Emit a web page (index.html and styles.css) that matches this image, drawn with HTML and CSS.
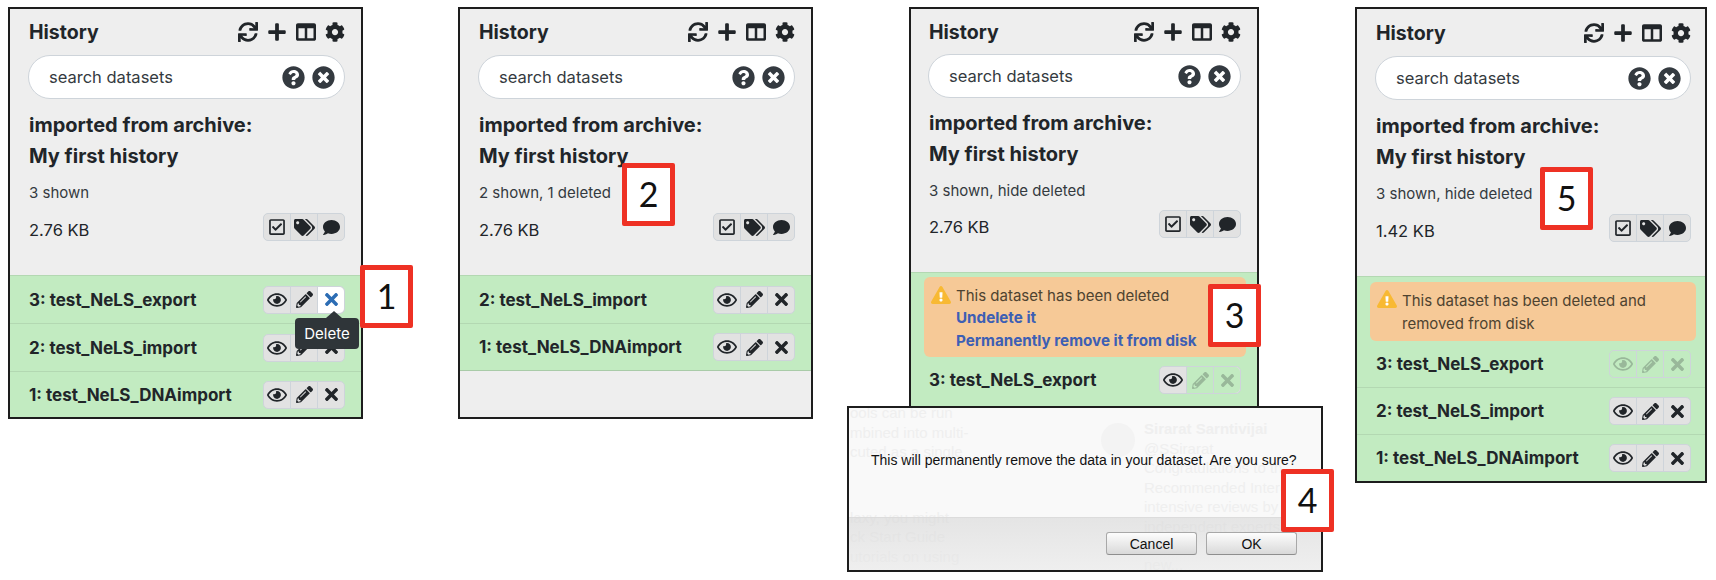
FILE: index.html
```html
<!DOCTYPE html>
<html lang="en">
<head>
    <meta charset="UTF-8">
    <title>History panel steps</title>
    <link rel="stylesheet" href="styles.css">
</head>
<body>
    <svg class="defs" width="0" height="0">
        <symbol id="i-sync" viewBox="0 0 512 512"><path d="M440.65 12.57l4 82.77A247.16 247.16 0 0 0 255.83 8C134.73 8 33.91 94.92 12.29 209.82A12 12 0 0 0 24.09 224h49.05a12 12 0 0 0 11.67-9.26 175.91 175.91 0 0 1 317-56.94l-101.46-4.86a12 12 0 0 0-12.57 12v47.41a12 12 0 0 0 12 12H500a12 12 0 0 0 12-12V12a12 12 0 0 0-12-12h-47.37a12 12 0 0 0-11.98 12.57zM255.83 432a175.61 175.61 0 0 1-146-77.8l101.8 4.87a12 12 0 0 0 12.57-12v-47.4a12 12 0 0 0-12-12H12a12 12 0 0 0-12 12V500a12 12 0 0 0 12 12h47.35a12 12 0 0 0 12-12.6l-4.15-82.57A247.17 247.17 0 0 0 255.83 504c121.11 0 221.93-86.92 243.55-201.82a12 12 0 0 0-11.8-14.18h-49.05a12 12 0 0 0-11.67 9.26A175.86 175.86 0 0 1 255.83 432z"/></symbol>
        <symbol id="i-plus" viewBox="0 0 448 512"><path d="M416 208H272V64c0-17.67-14.33-32-32-32h-32c-17.67 0-32 14.33-32 32v144H32c-17.67 0-32 14.33-32 32v32c0 17.67 14.33 32 32 32h144v144c0 17.67 14.33 32 32 32h32c17.67 0 32-14.33 32-32V304h144c17.67 0 32-14.33 32-32v-32c0-17.67-14.33-32-32-32z"/></symbol>
        <symbol id="i-columns" viewBox="0 0 512 512"><path d="M464 32H48C21.49 32 0 53.49 0 80v352c0 26.51 21.49 48 48 48h416c26.51 0 48-21.49 48-48V80c0-26.51-21.49-48-48-48zM224 416H64V160h160v256zm224 0H288V160h160v256z"/></symbol>
        <symbol id="i-cog" viewBox="0 0 512 512"><path d="M487.4 315.7l-42.6-24.6c4.3-23.2 4.3-47 0-70.2l42.6-24.6c4.9-2.8 7.1-8.6 5.5-14-11.1-35.6-30-67.8-54.7-94.6-3.8-4.1-10-5.1-14.8-2.3L380.8 110c-17.9-15.4-38.5-27.3-60.8-35.1V25.8c0-5.6-3.9-10.5-9.4-11.7-36.7-8.2-74.3-7.8-109.2 0-5.5 1.2-9.4 6.1-9.4 11.7V75c-22.2 7.9-42.8 19.8-60.8 35.1L88.7 85.5c-4.9-2.8-11-1.9-14.8 2.3-24.7 26.7-43.6 58.9-54.7 94.6-1.7 5.4.6 11.2 5.5 14L67.3 221c-4.3 23.2-4.3 47 0 70.2l-42.6 24.6c-4.9 2.8-7.1 8.6-5.5 14 11.1 35.6 30 67.8 54.7 94.6 3.8 4.1 10 5.1 14.8 2.3l42.6-24.6c17.9 15.4 38.5 27.3 60.8 35.1v49.2c0 5.6 3.9 10.5 9.4 11.7 36.7 8.2 74.3 7.8 109.2 0 5.5-1.2 9.4-6.1 9.4-11.7v-49.2c22.2-7.9 42.8-19.8 60.8-35.1l42.6 24.6c4.9 2.8 11 1.9 14.8-2.3 24.7-26.7 43.6-58.9 54.7-94.6 1.5-5.5-.7-11.3-5.6-14.1zM256 336c-44.1 0-80-35.9-80-80s35.9-80 80-80 80 35.9 80 80-35.9 80-80 80z"/></symbol>
        <symbol id="i-question" viewBox="0 0 512 512"><path d="M504 256c0 136.997-111.043 248-248 248S8 392.997 8 256C8 119.083 119.043 8 256 8s248 111.083 248 248zM262.655 90c-54.497 0-89.255 22.957-116.549 63.758-3.536 5.286-2.353 12.415 2.715 16.258l34.699 26.31c5.205 3.947 12.621 3.008 16.665-2.122 17.864-22.658 30.113-35.797 57.303-35.797 20.429 0 45.698 13.148 45.698 32.958 0 14.976-12.363 22.667-32.534 33.976C247.128 238.528 216 254.941 216 296v4c0 6.627 5.373 12 12 12h56c6.627 0 12-5.373 12-12v-1.333c0-28.462 83.186-29.647 83.186-106.667 0-58.002-60.165-102-116.531-102zM256 338c-25.365 0-46 20.635-46 46 0 25.364 20.635 46 46 46s46-20.636 46-46c0-25.365-20.635-46-46-46z"/></symbol>
        <symbol id="i-clear" viewBox="0 0 512 512"><path d="M256 8C119 8 8 119 8 256s111 248 248 248 248-111 248-248S393 8 256 8zm121.6 313.1c4.7 4.7 4.7 12.3 0 17L338 377.6c-4.7 4.7-12.3 4.7-17 0L256 312l-65.1 65.6c-4.7 4.7-12.3 4.7-17 0L134.4 338c-4.7-4.7-4.7-12.3 0-17l65.6-65-65.6-65.1c-4.7-4.7-4.7-12.3 0-17l39.6-39.6c4.7-4.7 12.3-4.7 17 0l65 65.7 65.1-65.6c4.7-4.7 12.3-4.7 17 0l39.6 39.6c4.7 4.7 4.7 12.3 0 17L312 256l65.6 65.1z"/></symbol>
        <symbol id="i-check" viewBox="0 0 448 512"><path d="M400 32H48C21.49 32 0 53.49 0 80v352c0 26.51 21.49 48 48 48h352c26.51 0 48-21.49 48-48V80c0-26.51-21.49-48-48-48zm0 400H48V80h352v352zm-35.864-241.724L191.547 361.48c-4.705 4.667-12.303 4.637-16.97-.068l-90.781-91.516c-4.667-4.705-4.637-12.303.069-16.971l22.719-22.536c4.705-4.667 12.303-4.637 16.97.069l59.792 60.277 141.352-140.216c4.705-4.667 12.303-4.637 16.97.068l22.536 22.718c4.667 4.706 4.637 12.304-.068 16.971z"/></symbol>
        <symbol id="i-tags" viewBox="0 0 640 512"><path d="M497.941 225.941L286.059 14.059A48 48 0 0 0 252.118 0H48C21.49 0 0 21.49 0 48v204.118a48 48 0 0 0 14.059 33.941l211.882 211.882c18.744 18.745 49.136 18.746 67.882 0l204.118-204.118c18.745-18.745 18.745-49.137 0-67.882zM112 160c-26.51 0-48-21.49-48-48s21.49-48 48-48 48 21.49 48 48-21.49 48-48 48zm513.941 133.823L421.823 497.941c-18.745 18.745-49.137 18.745-67.882 0l-.36-.36L527.64 323.522c16.999-16.999 26.36-39.6 26.36-63.64s-9.362-46.641-26.36-63.64L331.397 0h48.721a48 48 0 0 1 33.941 14.059l211.882 211.882c18.745 18.745 18.745 49.137 0 67.882z"/></symbol>
        <symbol id="i-comment" viewBox="0 0 512 512"><path d="M256 32C114.6 32 0 125.1 0 240c0 49.6 21.4 95 57 130.7C44.5 421.1 2.7 466 2.2 466.5c-2.2 2.3-2.8 5.7-1.5 8.7S4.8 480 8 480c66.3 0 116-31.8 140.6-51.4 32.7 12.3 69 19.4 107.4 19.4 141.4 0 256-93.1 256-208S397.4 32 256 32z"/></symbol>
        <symbol id="i-eye" viewBox="0 0 576 512"><path d="M288 144a110.94 110.94 0 0 0-31.24 5 55.4 55.4 0 0 1 7.24 27 56 56 0 0 1-56 56 55.4 55.4 0 0 1-27-7.24A111.71 111.71 0 1 0 288 144zm284.52 97.4C518.29 135.59 410.93 64 288 64S57.68 135.64 3.48 241.41a32.35 32.35 0 0 0 0 29.19C57.71 376.41 165.07 448 288 448s230.32-71.64 284.52-177.41a32.35 32.35 0 0 0 0-29.19zM288 400c-98.65 0-189.09-55-237.93-144C98.91 167 189.34 112 288 112s189.09 55 237.93 144C477.1 345 386.66 400 288 400z"/></symbol>
        <symbol id="i-pencil" viewBox="0 0 512 512"><path d="M497.9 142.1l-46.1 46.1c-4.7 4.7-12.3 4.7-17 0l-111-111c-4.7-4.7-4.7-12.3 0-17l46.1-46.1c18.7-18.7 49.1-18.7 67.9 0l60.1 60.1c18.8 18.7 18.8 49.1 0 67.9zM284.2 99.8L21.6 362.4.4 483.9c-2.9 16.4 11.4 30.6 27.8 27.8l121.5-21.3 262.6-262.6c4.7-4.7 4.7-12.3 0-17l-111-111c-4.8-4.7-12.4-4.7-17.1 0zM124.1 339.9c-5.5-5.5-5.5-14.3 0-19.8l154-154c5.5-5.5 14.3-5.5 19.8 0s5.5 14.3 0 19.8l-154 154c-5.5 5.5-14.3 5.5-19.8 0zM88 424h48v36.3l-64.5 11.3-31.1-31.1L51.7 376H88v48z"/></symbol>
        <symbol id="i-times" viewBox="0 0 352 512"><path d="M242.72 256l100.07-100.07c12.28-12.28 12.28-32.19 0-44.48l-22.24-22.24c-12.28-12.28-32.19-12.28-44.48 0L176 189.28 75.93 89.21c-12.28-12.28-32.19-12.28-44.48 0L9.21 111.45c-12.28 12.28-12.28 32.19 0 44.48L109.28 256 9.21 356.07c-12.28 12.28-12.28 32.19 0 44.48l22.24 22.24c12.28 12.28 32.2 12.28 44.48 0L176 322.72l100.07 100.07c12.28 12.28 32.2 12.28 44.48 0l22.24-22.24c12.28-12.28 12.28-32.19 0-44.48L242.72 256z"/></symbol>
        <symbol id="i-warn" viewBox="0 0 576 512"><path d="M569.517 440.013C587.975 472.007 564.806 512 527.94 512H48.054c-36.937 0-59.999-40.055-41.577-71.987L246.423 23.985c18.467-32.009 64.72-31.951 83.154 0l239.94 416.028zM288 354c-25.405 0-46 20.595-46 46s20.595 46 46 46 46-20.595 46-46-20.595-46-46-46zm-43.673-165.346l7.418 136c.347 6.364 5.609 11.346 11.982 11.346h48.546c6.373 0 11.635-4.982 11.982-11.346l7.418-136c.375-6.874-5.098-12.654-11.982-12.654h-63.383c-6.884 0-12.356 5.78-11.981 12.654z"/></symbol>
    </svg>

    <div class="page">

        <!-- step 1 -->
        <div class="panel panel-one">
            <div class="top">
                <div class="head">
                    <span class="head-title">History</span>
                    <div class="tools">
                        <svg class="tool"><use href="#i-sync"/></svg>
                        <svg class="tool"><use href="#i-plus"/></svg>
                        <svg class="tool"><use href="#i-columns"/></svg>
                        <svg class="tool"><use href="#i-cog"/></svg>
                    </div>
                </div>
                <div class="search">
                    <span class="search-text">search datasets</span>
                    <svg class="search-icon"><use href="#i-question"/></svg>
                    <svg class="search-icon"><use href="#i-clear"/></svg>
                </div>
                <div class="name">imported from archive:<br>My first history</div>
                <div class="shown">3 shown</div>
                <div class="size-row">
                    <span class="size">2.76 KB</span>
                    <div class="btns">
                        <span class="btn"><svg class="ic-check"><use href="#i-check"/></svg></span>
                        <span class="btn"><svg class="ic-tags"><use href="#i-tags"/></svg></span>
                        <span class="btn"><svg class="ic-comment"><use href="#i-comment"/></svg></span>
                    </div>
                </div>
            </div>
            <div class="row">
                <span class="row-name">3: test_NeLS_export</span>
                <div class="btns">
                    <span class="btn"><svg class="ic-eye"><use href="#i-eye"/></svg></span>
                    <span class="btn"><svg class="ic-pencil"><use href="#i-pencil"/></svg></span>
                    <span class="btn btn-hover">
                        <svg class="ic-times"><use href="#i-times"/></svg>
                        <span class="tooltip">Delete</span>
                    </span>
                </div>
            </div>
            <div class="row">
                <span class="row-name">2: test_NeLS_import</span>
                <div class="btns">
                    <span class="btn"><svg class="ic-eye"><use href="#i-eye"/></svg></span>
                    <span class="btn"><svg class="ic-pencil"><use href="#i-pencil"/></svg></span>
                    <span class="btn"><svg class="ic-times"><use href="#i-times"/></svg></span>
                </div>
            </div>
            <div class="row">
                <span class="row-name">1: test_NeLS_DNAimport</span>
                <div class="btns">
                    <span class="btn"><svg class="ic-eye"><use href="#i-eye"/></svg></span>
                    <span class="btn"><svg class="ic-pencil"><use href="#i-pencil"/></svg></span>
                    <span class="btn"><svg class="ic-times"><use href="#i-times"/></svg></span>
                </div>
            </div>
        </div>

        <!-- step 2 -->
        <div class="panel panel-two">
            <div class="top">
                <div class="head">
                    <span class="head-title">History</span>
                    <div class="tools">
                        <svg class="tool"><use href="#i-sync"/></svg>
                        <svg class="tool"><use href="#i-plus"/></svg>
                        <svg class="tool"><use href="#i-columns"/></svg>
                        <svg class="tool"><use href="#i-cog"/></svg>
                    </div>
                </div>
                <div class="search">
                    <span class="search-text">search datasets</span>
                    <svg class="search-icon"><use href="#i-question"/></svg>
                    <svg class="search-icon"><use href="#i-clear"/></svg>
                </div>
                <div class="name">imported from archive:<br>My first history</div>
                <div class="shown">2 shown, 1 deleted</div>
                <div class="size-row">
                    <span class="size">2.76 KB</span>
                    <div class="btns">
                        <span class="btn"><svg class="ic-check"><use href="#i-check"/></svg></span>
                        <span class="btn"><svg class="ic-tags"><use href="#i-tags"/></svg></span>
                        <span class="btn"><svg class="ic-comment"><use href="#i-comment"/></svg></span>
                    </div>
                </div>
            </div>
            <div class="row">
                <span class="row-name">2: test_NeLS_import</span>
                <div class="btns">
                    <span class="btn"><svg class="ic-eye"><use href="#i-eye"/></svg></span>
                    <span class="btn"><svg class="ic-pencil"><use href="#i-pencil"/></svg></span>
                    <span class="btn"><svg class="ic-times"><use href="#i-times"/></svg></span>
                </div>
            </div>
            <div class="row row-last">
                <span class="row-name">1: test_NeLS_DNAimport</span>
                <div class="btns">
                    <span class="btn"><svg class="ic-eye"><use href="#i-eye"/></svg></span>
                    <span class="btn"><svg class="ic-pencil"><use href="#i-pencil"/></svg></span>
                    <span class="btn"><svg class="ic-times"><use href="#i-times"/></svg></span>
                </div>
            </div>
        </div>

        <!-- step 3, the dialog of step 4 lies over its lower end -->
        <div class="panel panel-three">
            <div class="top">
                <div class="head">
                    <span class="head-title">History</span>
                    <div class="tools">
                        <svg class="tool"><use href="#i-sync"/></svg>
                        <svg class="tool"><use href="#i-plus"/></svg>
                        <svg class="tool"><use href="#i-columns"/></svg>
                        <svg class="tool"><use href="#i-cog"/></svg>
                    </div>
                </div>
                <div class="search">
                    <span class="search-text">search datasets</span>
                    <svg class="search-icon"><use href="#i-question"/></svg>
                    <svg class="search-icon"><use href="#i-clear"/></svg>
                </div>
                <div class="name">imported from archive:<br>My first history</div>
                <div class="shown">3 shown, hide deleted</div>
                <div class="size-row">
                    <span class="size">2.76 KB</span>
                    <div class="btns">
                        <span class="btn"><svg class="ic-check"><use href="#i-check"/></svg></span>
                        <span class="btn"><svg class="ic-tags"><use href="#i-tags"/></svg></span>
                        <span class="btn"><svg class="ic-comment"><use href="#i-comment"/></svg></span>
                    </div>
                </div>
            </div>
            <div class="green">
                <div class="alert">
                    <svg class="warn" viewBox="0 0 576 512"><rect x="225" y="160" width="126" height="300" fill="#fff"/><use href="#i-warn" width="576" height="512"/></svg>
                    <div class="alert-text">
                        This dataset has been deleted<br>
                        <a class="alert-link">Undelete it</a><br>
                        <a class="alert-link">Permanently remove it from disk</a>
                    </div>
                </div>
                <div class="row">
                    <span class="row-name">3: test_NeLS_export</span>
                    <div class="btns">
                        <span class="btn"><svg class="ic-eye"><use href="#i-eye"/></svg></span>
                        <span class="btn btn-off"><svg class="ic-pencil"><use href="#i-pencil"/></svg></span>
                        <span class="btn btn-off"><svg class="ic-times"><use href="#i-times"/></svg></span>
                    </div>
                </div>
            </div>
        </div>

        <!-- step 5 -->
        <div class="panel panel-five">
            <div class="top">
                <div class="head">
                    <span class="head-title">History</span>
                    <div class="tools">
                        <svg class="tool"><use href="#i-sync"/></svg>
                        <svg class="tool"><use href="#i-plus"/></svg>
                        <svg class="tool"><use href="#i-columns"/></svg>
                        <svg class="tool"><use href="#i-cog"/></svg>
                    </div>
                </div>
                <div class="search">
                    <span class="search-text">search datasets</span>
                    <svg class="search-icon"><use href="#i-question"/></svg>
                    <svg class="search-icon"><use href="#i-clear"/></svg>
                </div>
                <div class="name">imported from archive:<br>My first history</div>
                <div class="shown">3 shown, hide deleted</div>
                <div class="size-row">
                    <span class="size">1.42 KB</span>
                    <div class="btns">
                        <span class="btn"><svg class="ic-check"><use href="#i-check"/></svg></span>
                        <span class="btn"><svg class="ic-tags"><use href="#i-tags"/></svg></span>
                        <span class="btn"><svg class="ic-comment"><use href="#i-comment"/></svg></span>
                    </div>
                </div>
            </div>
            <div class="green">
                <div class="alert">
                    <svg class="warn" viewBox="0 0 576 512"><rect x="225" y="160" width="126" height="300" fill="#fff"/><use href="#i-warn" width="576" height="512"/></svg>
                    <div class="alert-text">This dataset has been deleted and<br>removed from disk</div>
                </div>
                <div class="row">
                    <span class="row-name">3: test_NeLS_export</span>
                    <div class="btns btns-off">
                        <span class="btn btn-off"><svg class="ic-eye"><use href="#i-eye"/></svg></span>
                        <span class="btn btn-off"><svg class="ic-pencil"><use href="#i-pencil"/></svg></span>
                        <span class="btn btn-off"><svg class="ic-times"><use href="#i-times"/></svg></span>
                    </div>
                </div>
                <div class="row">
                    <span class="row-name">2: test_NeLS_import</span>
                    <div class="btns">
                        <span class="btn"><svg class="ic-eye"><use href="#i-eye"/></svg></span>
                        <span class="btn"><svg class="ic-pencil"><use href="#i-pencil"/></svg></span>
                        <span class="btn"><svg class="ic-times"><use href="#i-times"/></svg></span>
                    </div>
                </div>
                <div class="row">
                    <span class="row-name">1: test_NeLS_DNAimport</span>
                    <div class="btns">
                        <span class="btn"><svg class="ic-eye"><use href="#i-eye"/></svg></span>
                        <span class="btn"><svg class="ic-pencil"><use href="#i-pencil"/></svg></span>
                        <span class="btn"><svg class="ic-times"><use href="#i-times"/></svg></span>
                    </div>
                </div>
            </div>
        </div>

        <!-- step 4: browser confirm over a blurred page -->
        <div class="dialog">
            <div class="ghost ghost-left">
                <p>ools can be run</p>
                <p>mbined into multi-</p>
                <p>cuted as a single</p>
                <p class="ghost-gap">laxy, you might</p>
                <p>ck Start Guide</p>
                <p>utorials on using</p>
            </div>
            <div class="ghost ghost-right">
                <span class="ghost-avatar"></span>
                <p class="ghost-bold">Sirarat Sarntivijai</p>
                <p>@SSirarat</p>
                <p>Congratulations to th</p>
                <p>Recommended Intere</p>
                <p>intensive reviews by</p>
                <p>independent experts</p>
                <p class="ghost-gap">new...</p>
            </div>
            <div class="dialog-body">This will permanently remove the data in your dataset. Are you sure?</div>
            <div class="dialog-foot">
                <button class="dialog-btn">Cancel</button>
                <button class="dialog-btn">OK</button>
            </div>
        </div>

        <div class="callout callout-1">1</div>
        <div class="callout callout-2">2</div>
        <div class="callout callout-3">3</div>
        <div class="callout callout-4">4</div>
        <div class="callout callout-5">5</div>
    </div>
</body>
</html>
```

FILE: styles.css
```css
*{
    margin: 0;
    padding: 0;
    box-sizing: border-box;
}
body{
    background: #fff;
    font-family: 'Inter', 'Liberation Sans', sans-serif;
    color: #212529;
}
.defs{
    position: absolute;
}
.page{
    position: relative;
    width: 1716px;
    height: 580px;
    overflow: hidden;
    display: flex;
    align-items: flex-start;
    padding: 7px 0 0 8px;
    gap: 95px;
}

/* history panel */
.panel{
    display: flex;
    flex-direction: column;
    border: 2px solid #1d1d1d;
    background: #eee;
    flex: none;
}
.panel-one, .panel-two{
    width: 355px;
    height: 412px;
}
.panel-three{
    width: 350px;
    height: 410px;
    margin-left: 1px;
    overflow: hidden;
}
.panel-five{
    width: 352px;
    height: 476px;
    margin-left: 1px;
}
.top{
    height: 266px;
    flex: none;
    padding: 0 16px 0 19px;
}
.panel-three .top{
    height: 263px;
    padding: 0 16px 0 18px;
}
.panel-five .top{
    height: 267px;
    padding: 0 14px 0 19px;
}
.head{
    display: flex;
    align-items: center;
    justify-content: space-between;
    height: 46px;
}
.panel-three .head{
    height: 45px;
}
.panel-five .head{
    height: 47px;
}
.head-title{
    font-size: 19.5px;
    font-weight: 700;
}
.tools{
    display: flex;
    align-items: center;
    gap: 9px;
}
.tool{
    width: 20px;
    height: 20px;
    fill: #212529;
}
.search{
    display: flex;
    align-items: center;
    height: 44px;
    margin-left: -1px;
    background: #fff;
    border: 1px solid #ced4da;
    border-radius: 22px;
    padding: 0 9px 0 20px;
    gap: 7px;
}
.search-text{
    flex: 1;
    font-size: 16.5px;
    color: #343a40;
}
.search-icon{
    width: 23px;
    height: 23px;
    fill: #343a40;
}
.name{
    font-size: 20px;
    font-weight: 700;
    line-height: 30.5px;
    margin-top: 11px;
}
.shown{
    font-size: 15px;
    line-height: 20px;
    margin-top: 12px;
    color: #343a40;
}
.size-row{
    display: flex;
    justify-content: space-between;
    align-items: flex-start;
    margin-top: 10px;
}
.panel-three .name{
    margin-top: 10px;
}
.panel-three .size-row{
    margin-top: 9px;
}
.size{
    font-size: 16.5px;
    line-height: 24px;
    margin-top: 5px;
}

/* button groups */
.btns{
    display: flex;
    width: 82px;
    height: 28px;
    flex: none;
    border: 1px solid #ced4da;
    border-radius: 5px;
    background: #e2e2e2;
}
.btn{
    position: relative;
    flex: 1;
    display: flex;
    align-items: center;
    justify-content: center;
    border-left: 1px solid #ced4da;
}
.btn:first-child{
    border-left: 0;
    border-radius: 5px 0 0 5px;
}
.btn:last-child{
    border-radius: 0 5px 5px 0;
}
.btn svg{
    fill: #212529;
}
.ic-check{ width: 16px; height: 18px; }
.ic-tags{ width: 21px; height: 17px; }
.ic-comment{ width: 17px; height: 17px; }
.ic-eye{ width: 20px; height: 18px; }
.ic-pencil{ width: 17px; height: 17px; }
.ic-times{ width: 13px; height: 19px; }
.btn-hover{
    background: #fff;
}
.btn-hover svg{
    fill: #2c6db4;
}
.btn-off{
    background: #c2ebc1;
}
.btn-off svg{
    opacity: 0.25;
}
.btns-off{
    background: #c2ebc1;
}
.tooltip{
    position: absolute;
    top: 31px;
    left: -23px;
    width: 64px;
    height: 31px;
    background: #2f3539;
    color: #fff;
    border-radius: 4px;
    font-size: 15px;
    line-height: 31px;
    text-align: center;
    z-index: 2;
}
.tooltip::before{
    content: "";
    position: absolute;
    top: -7px;
    left: 31px;
    border-left: 8px solid transparent;
    border-right: 8px solid transparent;
    border-bottom: 7px solid #2f3539;
}

/* dataset rows */
.green{
    flex: 1;
    background: #c2ebc1;
    border-top: 1px solid #b3d8b2;
}
.row{
    display: flex;
    align-items: center;
    justify-content: space-between;
    height: 48px;
    flex: none;
    padding: 0 16px 0 19px;
    background: #c2ebc1;
    border-top: 1px solid #b3d8b2;
}
.panel-one .row:last-child{
    height: 46px;
}
.green .row{
    border-top: 0;
    border-bottom: 1px solid #b3d8b2;
}
.panel-three .row{
    height: 46px;
    padding: 0 16px 0 18px;
    border-bottom: 0;
}
.panel-five .row{
    height: 47px;
    padding: 0 14px 0 19px;
}
.panel-five .row:last-child{
    height: 46px;
    border-bottom: 0;
}
.row-last{
    border-bottom: 1px solid #a9cba8;
}
.row-name{
    font-size: 17px;
    font-weight: 700;
}
.alert{
    display: flex;
    gap: 5px;
    margin: 4px 11px 0 13px;
    padding: 7.5px 7px 5px;
    background: #f6c997;
    border-radius: 6px;
    color: #4e4330;
    font-size: 15px;
    line-height: 22.5px;
}
.panel-five .alert{
    margin: 5px 9px 0 13px;
    padding: 7px 7px 6px;
    line-height: 23px;
}
.warn{
    width: 20px;
    height: 18px;
    margin-top: 1px;
    flex: none;
    fill: #f8b933;
}
.alert-link{
    font-size: 15.2px;
    font-weight: 700;
    color: #3d5fb4;
}

/* confirm dialog */
.dialog{
    position: absolute;
    left: 847px;
    top: 406px;
    width: 476px;
    height: 166px;
    border: 2px solid #1d1d1d;
    background: #f9f9f9;
    overflow: hidden;
    z-index: 3;
}
.ghost{
    position: absolute;
    font-family: 'Liberation Sans', sans-serif;
    font-size: 15px;
    line-height: 19.5px;
    color: #efefef;
    white-space: nowrap;
}
.ghost-left{
    left: 1px;
    top: -5px;
}
.ghost-right{
    left: 295px;
    top: 11px;
}
.ghost-bold{
    font-weight: 700;
}
.ghost-left .ghost-gap{
    margin-top: 46px;
}
.ghost-right .ghost-gap{
    margin-top: 19px;
}
.ghost-avatar{
    position: absolute;
    left: -43px;
    top: 4px;
    width: 34px;
    height: 34px;
    border-radius: 50%;
    background: #f3f3f3;
}
.dialog-body{
    position: relative;
    height: 109px;
    padding: 43px 0 0 22px;
    font-family: 'Liberation Sans', sans-serif;
    font-size: 14px;
    line-height: 18px;
    color: #111;
    white-space: nowrap;
}
.dialog-foot{
    position: relative;
    display: flex;
    justify-content: flex-end;
    gap: 9px;
    height: 53px;
    padding: 14px 24px 0 0;
    background: linear-gradient(rgba(215,215,215,0.6), rgba(232,232,232,0.6));
    border-top: 1px solid #dcdcdc;
}
.dialog-btn{
    width: 91px;
    height: 23px;
    border: 1px solid #a8a8a8;
    border-bottom-color: #8e8e8e;
    border-radius: 3px;
    background: linear-gradient(#fdfdfd, #d9d9d9);
    font-family: 'Liberation Sans', sans-serif;
    font-size: 14px;
    color: #111;
}

/* numbered markers */
.callout{
    position: absolute;
    width: 53px;
    height: 63px;
    border: 5px solid #ee3124;
    border-radius: 2px;
    background: #fff;
    font-family: 'Lato', sans-serif;
    font-size: 34px;
    line-height: 51px;
    text-align: center;
    color: #111;
    z-index: 4;
}
.callout-1{ left: 360px; top: 265px; }
.callout-2{ left: 622px; top: 163px; }
.callout-3{ left: 1208px; top: 284px; }
.callout-4{ left: 1281px; top: 469px; }
.callout-5{ left: 1540px; top: 167px; }
```
